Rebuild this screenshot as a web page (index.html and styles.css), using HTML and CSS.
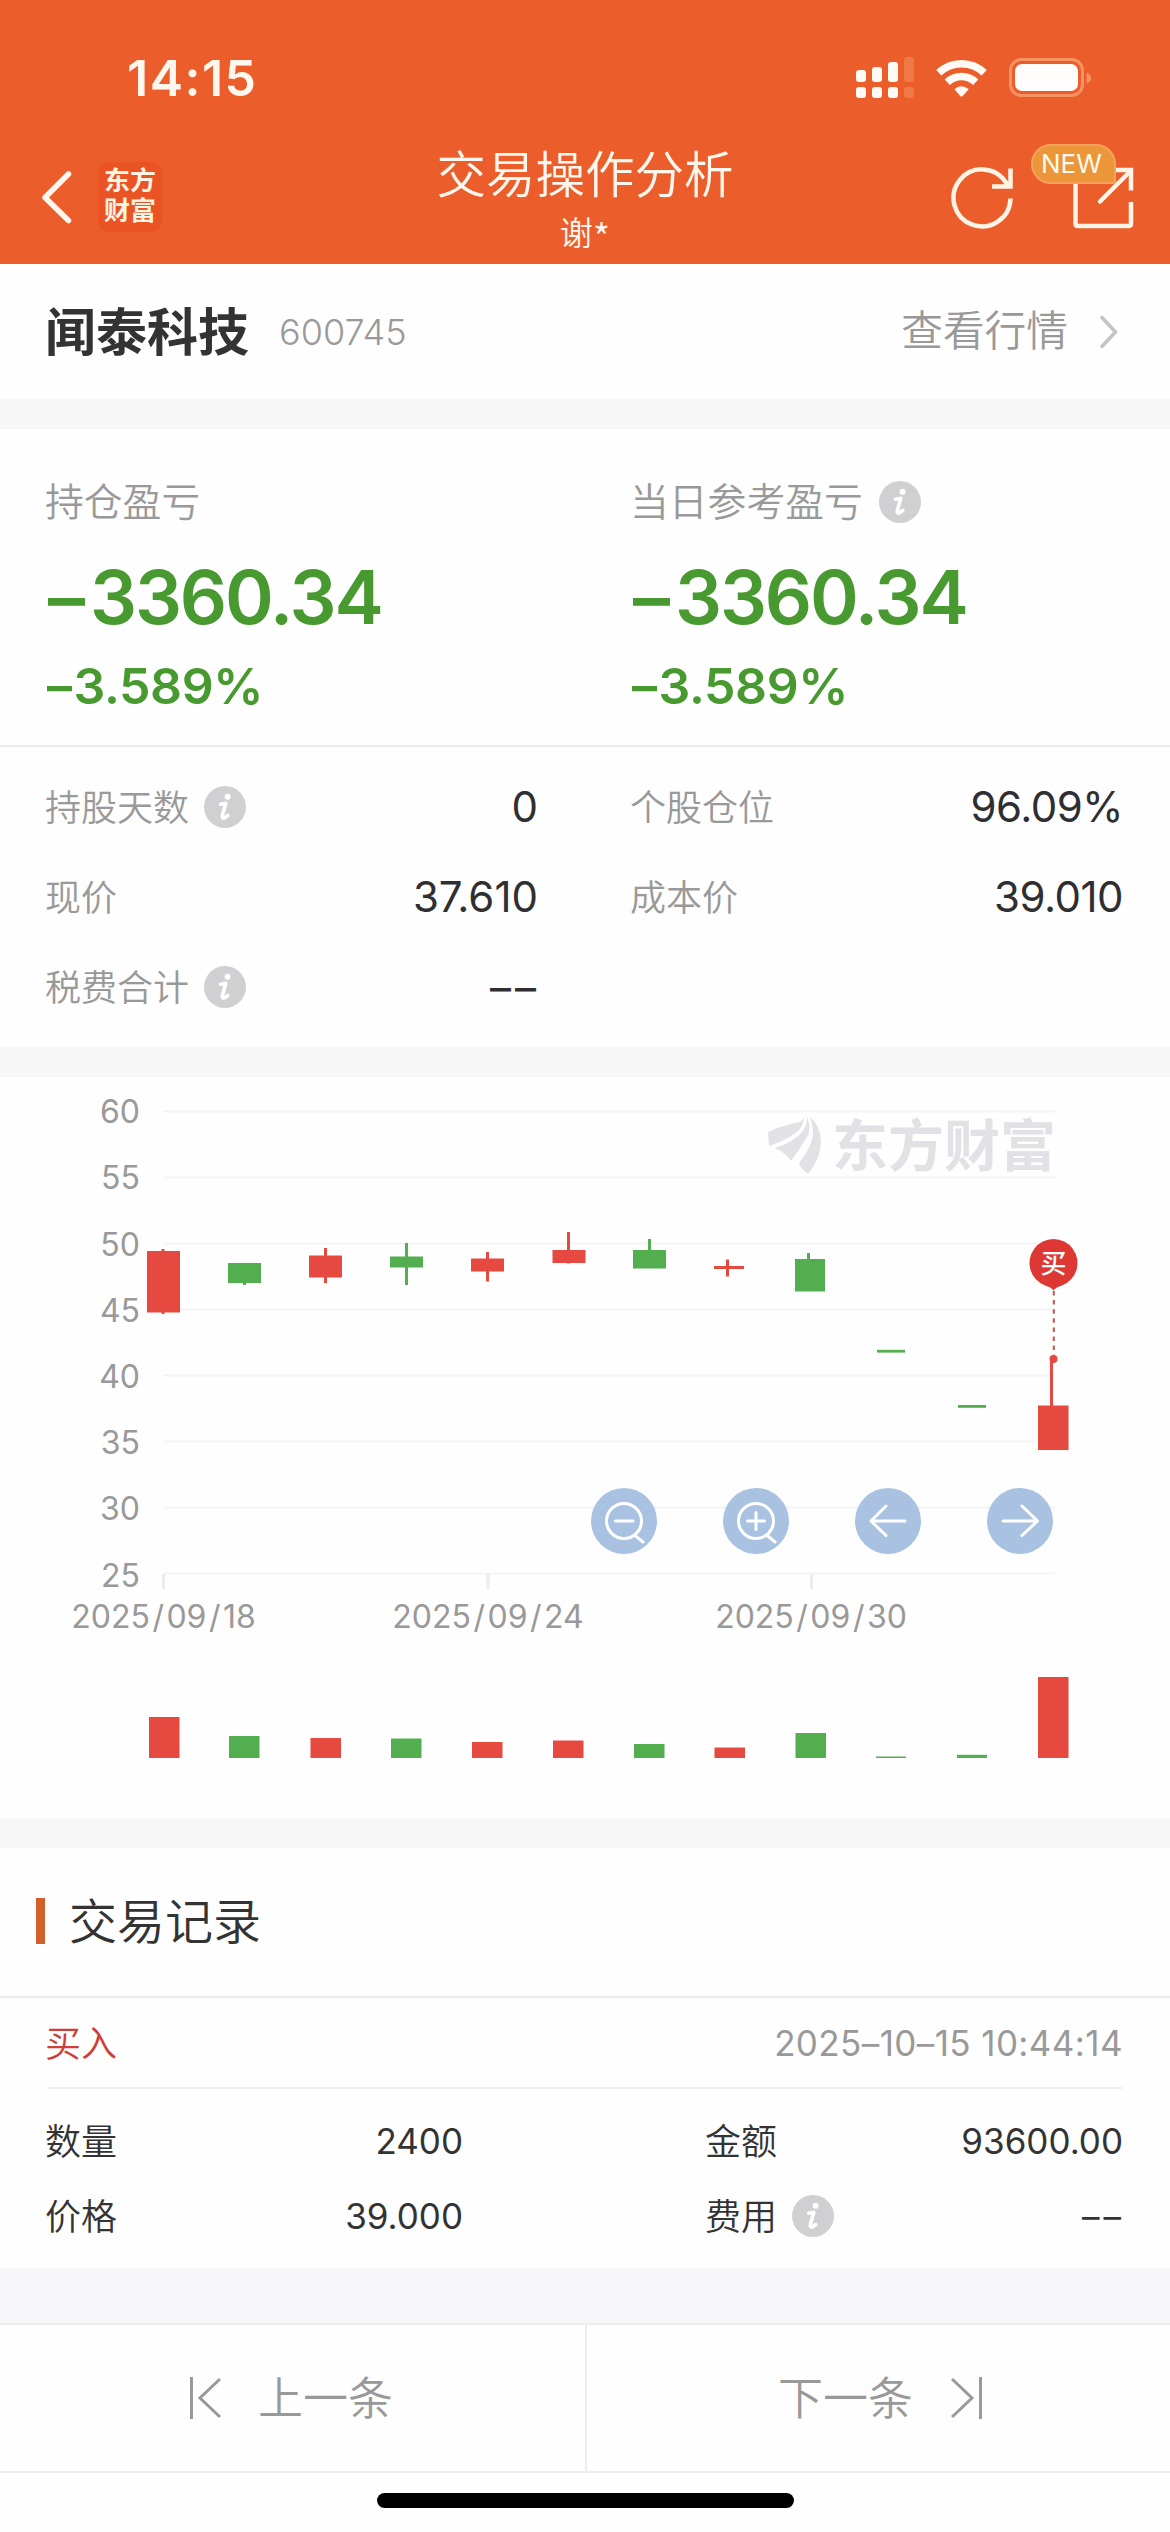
FILE: index.html
```html
<!DOCTYPE html>
<html lang="zh-CN">
<head>
<meta charset="utf-8">
<title>交易操作分析</title>
<link rel="stylesheet" href="styles.css">
</head>
<body>
<svg class="defs" aria-hidden="true">
  <symbol id="info" viewBox="0 0 42 42">
    <circle cx="21" cy="21" r="21" fill="#d0d0d3"/>
    <circle cx="23.6" cy="10.8" r="3" fill="#fff"/>
    <path d="M16.500 18.200L21.800 17.400L18.300 29.500Q17.800 33 21 31.500L23.800 29.500" fill="none" stroke="#fff" stroke-width="3.600" stroke-linecap="round" stroke-linejoin="round"/>
  </symbol>
</svg>

<header class="header">
  <div class="status">
    <span class="time">14:15</span>
    <div class="status-icons">
      <svg width="50" height="42" viewBox="855 57 50 42" class="signal">
        <g fill="#fffaf4">
          <rect x="856" y="70" width="10" height="12" rx="3"/><rect x="872" y="67" width="10" height="15" rx="3"/><rect x="888" y="62" width="10" height="20" rx="3"/>
          <rect x="856" y="87" width="10" height="11" rx="3"/><rect x="872" y="87" width="10" height="11" rx="3"/><rect x="888" y="87" width="10" height="11" rx="3"/>
        </g>
        <g fill="#f07a46"><rect x="904" y="57" width="10" height="25" rx="3"/><rect x="904" y="87" width="10" height="11" rx="3"/></g>
      </svg>
      <svg width="52" height="40" viewBox="935 57 52 40" fill="none" stroke="#fffaf4">
        <path d="M938.800 71.800A33 33 0 0 1 984.200 71.800" stroke-width="7.500"/>
        <path d="M947.300 81.300A20.500 20.500 0 0 1 975.700 81.300" stroke-width="7.500"/>
        <path d="M954.300 88.300Q961.500 82 968.700 88.300L962.500 95.200Q961.500 96 960.500 95.200Z" fill="#fffaf4" stroke="none"/>
      </svg>
      <svg width="84" height="42" viewBox="1008 57 84 42">
        <rect x="1010.500" y="59.500" width="72" height="36" rx="11" fill="none" stroke="#f79263" stroke-width="3"/>
        <rect x="1015" y="64" width="63" height="27" rx="7" fill="#fffdfb"/>
        <path d="M1086.500 72.500q4.500 1.500 4.500 5.500t-4.500 5.500z" fill="#f79263"/>
      </svg>
    </div>
  </div>
  <div class="nav">
    <div class="nav-left">
      <svg width="34" height="58" viewBox="40 170 34 58" fill="none" stroke="#fff7ee" stroke-width="5.500" stroke-linecap="round" stroke-linejoin="round"><path d="M68.500 176L45 199.500L68.500 222.500"/></svg>
      <div class="brand"><span>东方</span><span>财富</span></div>
    </div>
    <div class="nav-title">
      <h1>交易操作分析</h1>
      <p>谢<span class="star">*</span></p>
    </div>
    <div class="nav-right">
      <svg width="66" height="66" viewBox="950 165 66 66" fill="none" stroke="#fff4e6" stroke-width="4.500">
        <path d="M1010.500 198.500A28.500 28.500 0 1 1 1006 182.500L1009 186"/>
        <path d="M1010.500 168.500V186.500H992"/>
      </svg>
      <div class="share">
        <svg width="62" height="66" viewBox="1072 165 62 66" fill="none" stroke="#fff4e6" stroke-width="4.500">
          <path d="M1075.500 180V223.500Q1075.500 226 1078 226H1128.500Q1131 226 1131 223.500V202"/>
          <path d="M1108 170H1131V190.500"/>
          <path d="M1100 201.500L1130 171.500" stroke-linecap="round"/>
        </svg>
        <span class="badge">NEW</span>
      </div>
    </div>
  </div>
</header>

<main>
  <section class="stock">
    <span class="stock-name">闻泰科技</span>
    <span class="stock-code">600745</span>
    <span class="quote-link">查看行情</span>
    <svg class="chev" width="20" height="36" viewBox="0 0 20 36" fill="none" stroke="#c4c4c6" stroke-width="3.500"><path d="M2 2.500L16.500 18L2 33.500"/></svg>
  </section>

  <section class="profit">
    <div class="profit-item">
      <div class="profit-label"><span class="cn">持仓盈亏</span></div>
      <div class="profit-value"><span class="minus">–</span>3360.34</div>
      <div class="profit-rate"><span class="minus">–</span>3.589%</div>
    </div>
    <div class="profit-item">
      <div class="profit-label"><span class="cn">当日参考盈亏</span><svg class="info"><use href="#info"/></svg></div>
      <div class="profit-value"><span class="minus">–</span>3360.34</div>
      <div class="profit-rate"><span class="minus">–</span>3.589%</div>
    </div>
  </section>

  <section class="stats">
    <div class="stat"><span class="cn">持股天数</span><svg class="info"><use href="#info"/></svg><b>0</b></div>
    <div class="stat"><span class="cn">个股仓位</span><b>96.09%</b></div>
    <div class="stat"><span class="cn">现价</span><b>37.610</b></div>
    <div class="stat"><span class="cn">成本价</span><b>39.010</b></div>
    <div class="stat"><span class="cn">税费合计</span><svg class="info"><use href="#info"/></svg><b class="dash">––</b></div>
  </section>

  <section class="chart">
    <svg width="1170" height="741" viewBox="0 1077 1170 741">
      <g stroke="#f4f4f4" stroke-width="2">
        <path d="M163 1111.500H1055M163 1177.500H1055M163 1243.500H1055M163 1309.500H1055M163 1375.500H1055M163 1441.500H1055M163 1507.500H1055M163 1573.500H1055"/>
      </g>
      <path d="M163.500 1574V1589M488 1574V1589M811.500 1574V1589" stroke="#ececee" stroke-width="3"/>
      <g class="axis" text-anchor="end">
        <text x="140" y="1123">60</text><text x="140" y="1189">55</text><text x="140" y="1255.500">50</text><text x="140" y="1322">45</text>
        <text x="140" y="1388">40</text><text x="140" y="1454">35</text><text x="140" y="1520">30</text><text x="140" y="1587">25</text>
      </g>
      <g class="axis" text-anchor="middle">
        <text x="163.500" y="1627.500">2025<tspan dx="2.500">/</tspan><tspan dx="2.500">09</tspan><tspan dx="2.500">/</tspan><tspan dx="2.500">18</tspan></text>
        <text x="488" y="1627.500">2025<tspan dx="2.500">/</tspan><tspan dx="2.500">09</tspan><tspan dx="2.500">/</tspan><tspan dx="2.500">24</tspan></text>
        <text x="811" y="1627.500">2025<tspan dx="2.500">/</tspan><tspan dx="2.500">09</tspan><tspan dx="2.500">/</tspan><tspan dx="2.500">30</tspan></text>
      </g>

      <g fill="#e2e2e6">
        <path d="M768 1132Q783 1125 800 1122Q803 1120 804 1117Q804 1126 797 1132Q785 1141 769 1146Z"/>
        <path d="M775 1148Q794 1142 803 1131Q807 1125 807 1117Q811 1127 808 1135Q800 1149 791 1161Q786 1153 775 1148Z"/>
        <path d="M810 1117Q821 1126 821 1143Q820 1160 808 1174Q801 1169 799 1163Q814 1144 813 1130Q812 1123 810 1117Z"/>
      </g>
      <text class="watermark" x="832" y="1166">东方财富</text>

      <g fill="#e54940">
        <rect x="147" y="1251" width="33" height="61.500"/><rect x="161.500" y="1249" width="3" height="65"/>
        <rect x="309" y="1255.500" width="33" height="22"/><rect x="324" y="1248" width="3" height="35"/>
        <rect x="471" y="1258.500" width="33" height="13"/><rect x="486" y="1252" width="3" height="29.500"/>
        <rect x="552.500" y="1250" width="33" height="13"/><rect x="567" y="1232" width="3" height="31.500"/>
        <rect x="714" y="1266" width="30" height="3"/><rect x="726" y="1259.500" width="3" height="17"/>
        <rect x="1038" y="1405.500" width="30.500" height="44.500"/><rect x="1050" y="1362" width="3" height="44"/>
        <circle cx="1053.500" cy="1359" r="4"/>
        <rect x="149" y="1717" width="30.500" height="41"/><rect x="310.500" y="1738" width="30.500" height="20"/>
        <rect x="472" y="1742" width="30.500" height="16"/><rect x="553" y="1740.500" width="30.500" height="17.500"/>
        <rect x="714.500" y="1747.500" width="30.500" height="10.500"/><rect x="1038" y="1677" width="30.500" height="81"/>
      </g>
      <g fill="#52ae4f">
        <rect x="228" y="1263" width="33" height="20"/><rect x="243" y="1282" width="3" height="3"/>
        <rect x="390" y="1256.500" width="33" height="11"/><rect x="405" y="1243" width="3" height="42"/>
        <rect x="633" y="1250" width="33" height="18.500"/><rect x="648" y="1239" width="3" height="12"/>
        <rect x="795" y="1259" width="30" height="32.500"/><rect x="807" y="1253" width="3" height="7"/>
        <rect x="877" y="1349.800" width="28" height="2.800"/><rect x="958" y="1405" width="28" height="2.800"/>
        <rect x="229" y="1736" width="30.500" height="22"/><rect x="391" y="1738.500" width="30.500" height="19.500"/>
        <rect x="634" y="1744" width="30.500" height="14"/><rect x="795.500" y="1733" width="30.500" height="25"/>
        <rect x="876" y="1756.500" width="30" height="1.500"/><rect x="957" y="1754.800" width="30" height="3.200"/>
      </g>

      <path d="M1053.800 1291V1356" stroke="#c9504a" stroke-width="2" stroke-dasharray="4.500 4.600"/>
      <path d="M1053.500 1290.500Q1051 1287 1045 1285.500A24 24 0 1 1 1062 1285.500Q1056 1287 1053.500 1290.500Z" fill="#dd3833"/>
      <text class="pin" x="1053.500" y="1272.500" text-anchor="middle">买</text>

      <g fill="#a5bfe1" fill-opacity=".96">
        <circle cx="624" cy="1521" r="33"/><circle cx="756" cy="1521" r="33"/><circle cx="888" cy="1521" r="33"/><circle cx="1020" cy="1521" r="33"/>
      </g>
      <g fill="none" stroke="#fff" stroke-width="3" stroke-linecap="round" stroke-linejoin="round">
        <circle cx="624" cy="1521" r="17.500"/><path d="M615.500 1521H633M634.500 1535L643 1542"/>
        <circle cx="756" cy="1521" r="17.500"/><path d="M747.500 1521H764.500M756 1512.500V1529.500M766.500 1535L775 1542"/>
        <path d="M905 1521H871.500M886 1506L871 1521L886 1535.500"/>
        <path d="M1003 1521H1036.500M1022 1506L1037.500 1521L1022 1535.500"/>
      </g>
    </svg>
  </section>

  <section class="records">
    <h2>交易记录</h2>
    <div class="record-head"><span class="cn buy">买入</span><time>2025–10–15 10:44:14</time></div>
    <div class="record-body">
      <div class="cell"><span class="cn">数量</span><b>2400</b></div>
      <div class="cell"><span class="cn">金额</span><b>93600.00</b></div>
      <div class="cell"><span class="cn">价格</span><b>39.000</b></div>
      <div class="cell"><span class="cn">费用</span><svg class="info"><use href="#info"/></svg><b class="dash">––</b></div>
    </div>
  </section>
</main>

<footer>
  <div class="pager">
    <div class="page-btn prev">
      <svg width="32" height="44" viewBox="0 0 32 44" fill="none" stroke="#999" stroke-width="3"><path d="M2.500 1V43M31 3L11 22L31 41"/></svg>
      <span>上一条</span>
    </div>
    <div class="page-btn next">
      <span>下一条</span>
      <svg width="32" height="44" viewBox="0 0 32 44" fill="none" stroke="#999" stroke-width="3"><path d="M29.500 1V43M1 3L21 22L1 41"/></svg>
    </div>
  </div>
  <div class="home-bar"></div>
</footer>
</body>
</html>
```
FILE: styles.css
```css
* { box-sizing: border-box; margin: 0; padding: 0; }

body {
  width: 1170px;
  height: 2532px;
  overflow: hidden;
  background: #fefefe;
  color: #333;
  font-family: Inter, "Noto Sans CJK SC", sans-serif;
}

svg { display: block; flex: none; }
.defs { display: none; }
b { font-weight: 370; }

.cn {
  font-family: "Noto Sans CJK SC", sans-serif;
  font-weight: 350;
  line-height: 1;
  padding-bottom: .11em;
}

.info { width: 42px; height: 42px; }

/* header */
.header { height: 264px; background: #eb5e2b; color: #fff7ee; }
.status {
  display: flex;
  align-items: center;
  justify-content: space-between;
  height: 130px;
  padding: 26px 78px 0 127px;
}
.time { font-size: 50px; font-weight: 600; letter-spacing: 1.5px; line-height: 50px; }
.status-icons { display: flex; align-items: center; }
.signal { margin-right: 30px; overflow: visible; }
.status-icons svg:nth-child(2) { margin-right: 21px; }

.nav { display: grid; grid-template-columns: 390px 390px 390px; height: 134px; }
.nav-left { display: flex; align-items: center; padding-left: 40px; gap: 24px; }
.brand {
  display: flex;
  flex-direction: column;
  width: 64px;
  height: 70px;
  padding: 2px 0 0 6px;
  border-radius: 10px;
  background: #ea5424;
  color: #fff3e2;
  font: 700 26px/30px "Noto Sans CJK SC", sans-serif;
}
.nav-title {
  display: flex;
  flex-direction: column;
  align-items: center;
  gap: 17px;
  padding-top: 17px;
  font-family: "Noto Sans CJK SC", sans-serif;
}
.nav-title h1 { font-size: 49.500px; font-weight: 350; line-height: 50px; }
.nav-title p { display: flex; font-size: 33px; font-weight: 350; line-height: 34px; }
.star { padding-top: 5px; font-size: 38px; }
.nav-right { display: flex; align-items: center; justify-content: flex-end; gap: 56px; padding: 2px 36px 0 0; }
.share { position: relative; }
.badge {
  position: absolute;
  left: -41px;
  top: -21px;
  width: 85px;
  height: 40px;
  padding-left: 8px;
  border: 2px solid #f4a35c;
  border-radius: 20px 20px 2px 20px;
  background: #ec963a;
  color: #fff9ee;
  font-size: 26px;
  line-height: 36px;
}

/* stock title */
.stock {
  display: flex;
  align-items: center;
  height: 135px;
  padding: 0 51px 0 45px;
}
.stock-name { font: 600 51px/1 "Noto Sans CJK SC", sans-serif; padding-bottom: 5px; }
.stock-code { margin-left: 30px; font-size: 36px; font-weight: 350; color: #999; }
.quote-link {
  margin-left: auto;
  padding-bottom: 5px;
  color: #999;
  font: 350 41.700px/1 "Noto Sans CJK SC", sans-serif;
}
.chev { margin-left: 31px; }

/* profit */
.profit {
  display: grid;
  grid-template-columns: 585px 585px;
  height: 348px;
  border-top: 30px solid #f7f7f7;
  border-bottom: 2px solid #ebebeb;
}
.profit-item { padding: 52px 0 0 47px; color: #489a30; font-weight: 600; }
.profit-label {
  display: flex;
  align-items: center;
  gap: 16px;
  height: 42px;
  margin-left: -2px;
  color: #999;
  font-size: 38.800px;
}
.profit-value { margin-top: 37px; font-size: 74px; line-height: 74px; letter-spacing: -2.100px; }
.profit-value .minus { margin: 0 7px 0 1px; }
.profit-rate { margin-top: 27px; font-size: 50px; line-height: 50px; letter-spacing: -.400px; }
.profit-rate .minus { margin-right: 2px; }

/* holding stats */
.stats {
  display: grid;
  grid-template-columns: 585px 585px;
  grid-auto-rows: 90px;
  height: 300px;
  padding-top: 15px;
}
.stat { display: flex; align-items: center; padding: 0 47px 0 45px; color: #999; font-size: 36px; }
.stat .info { margin-left: 15px; }
.stat b { margin-left: auto; color: #2f2f31; font-size: 42px; line-height: 42px; }
.stat:nth-child(even) b { letter-spacing: -.500px; }
.dash { letter-spacing: 4px; margin-right: -2px; }
.stat .dash { padding-top: 2px; }

/* chart */
.chart { height: 771px; border-top: 30px solid #f7f7f7; }
.axis { fill: #999; font-size: 32px; font-weight: 370; }
.watermark { fill: #e2e2e6; font: 700 56px "Noto Sans CJK SC", sans-serif; }
.pin { fill: #fff; font: 500 26px "Noto Sans CJK SC", sans-serif; }

/* records */
.records { height: 450px; border-top: 30px solid #f7f7f7; }
.records h2 {
  display: flex;
  align-items: center;
  height: 150px;
  padding: 0 0 8px 36px;
  border-bottom: 2px solid #ececec;
  font: 350 48px/1 "Noto Sans CJK SC", sans-serif;
}
.records h2::before { content: ""; width: 9px; height: 46px; margin: 6px 24px 0 0; background: #d2602b; }
.record-head {
  display: flex;
  align-items: center;
  justify-content: space-between;
  height: 91px;
  margin: 0 47px;
  border-bottom: 2px solid #f0f0f0;
  font-size: 36px;
}
.buy { margin-left: -2px; color: #d03c36; }
.record-head time { color: #999; font-size: 35px; font-weight: 370; letter-spacing: .4px; }
.record-body {
  display: grid;
  grid-template-columns: 418px 418px;
  grid-auto-rows: 75.500px;
  justify-content: space-between;
  padding: 14px 47px 0 45px;
}
.cell { display: flex; align-items: center; font-size: 36px; }
.cell .info { margin-left: 15px; }
.cell b { margin-left: auto; font-size: 35px; line-height: 36px; }

/* pager */
footer { border-top: 55px solid #f6f6f8; }
.pager {
  display: grid;
  grid-template-columns: 585px 585px;
  height: 150px;
  border-top: 2px solid #ededef;
  border-bottom: 2px solid #ededef;
}
.page-btn {
  display: flex;
  align-items: center;
  color: #999;
  font: 350 45px/1 "Noto Sans CJK SC", sans-serif;
}
.page-btn span { padding-bottom: 5px; }
.prev { padding-left: 189px; gap: 37px; }
.next { padding-left: 191px; gap: 38px; border-left: 2px solid #ededef; }
.home-bar { width: 417px; height: 15px; margin: 20px auto 0; border-radius: 8px; background: #000; }
```
